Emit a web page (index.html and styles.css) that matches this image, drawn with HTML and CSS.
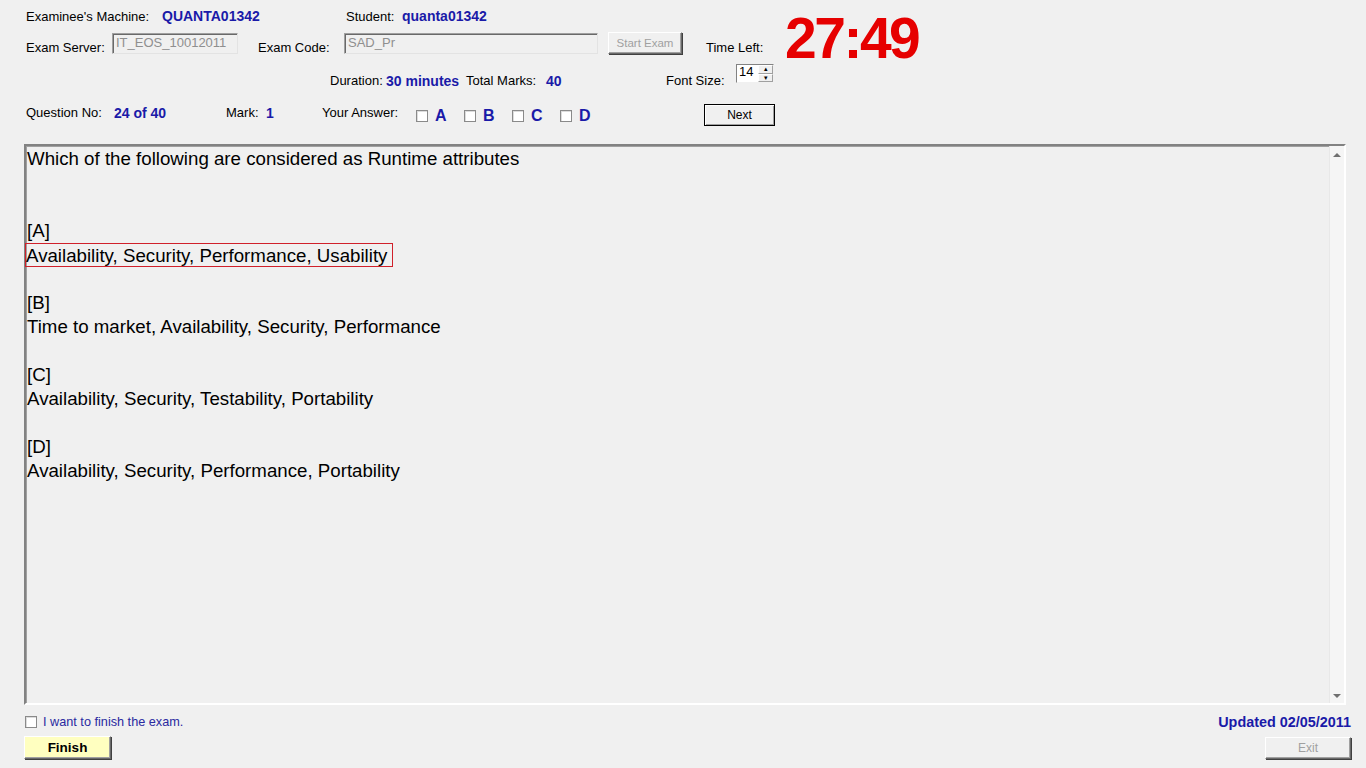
FILE: index.html
```html
<!DOCTYPE html>
<html>
<head>
<meta charset="utf-8">
<link rel="stylesheet" href="styles.css">
</head>
<body>
<div class="page">
  <div class="header">
    <div class="hleft">
      <div class="row r1">
        <span class="lbl w-machine">Examinee's Machine:</span>
        <span class="val w-machval">QUANTA01342</span>
        <span class="lbl w-student">Student:</span>
        <span class="val">quanta01342</span>
      </div>
      <div class="row r2">
        <span class="lbl low w-server">Exam Server:</span>
        <span class="tbox tb-server">IT_EOS_10012011</span>
        <span class="lbl low w-code">Exam Code:</span>
        <span class="tbox tb-code">SAD_Pr</span>
        <span class="btn btn-start">Start Exam</span>
        <span class="lbl low timeleft">Time Left:</span>
      </div>
      <div class="row r3">
        <span class="lbl w-dur">Duration:</span>
        <span class="val w-durval">30 minutes</span>
        <span class="lbl w-tm">Total Marks:</span>
        <span class="val w-tmval">40</span>
        <span class="lbl low w-fs">Font Size:</span>
        <span class="spin"><span class="spinval">14</span><span class="spinbtns"><span class="sb">&#9652;</span><span class="sb">&#9662;</span></span></span>
      </div>
    </div>
    <div class="timer">27:49</div>
  </div>
  <div class="row r4">
    <span class="lbl w-qno">Question No:</span>
    <span class="val w-qval">24 of 40</span>
    <span class="lbl w-mark">Mark:</span>
    <span class="val w-mval">1</span>
    <span class="lbl w-ans">Your Answer:</span>
    <span class="opts">
      <span class="opt"><span class="cb"></span><span class="optl">A</span></span>
      <span class="opt"><span class="cb"></span><span class="optl">B</span></span>
      <span class="opt"><span class="cb"></span><span class="optl">C</span></span>
      <span class="opt"><span class="cb"></span><span class="optl">D</span></span>
    </span>
    <span class="btn btn-next">Next</span>
  </div>
  <div class="qbox">
    <div class="qtext">
      <div class="ln">Which of the following are considered as Runtime attributes</div>
      <div class="ln">&nbsp;</div>
      <div class="ln">&nbsp;</div>
      <div class="ln">[A]</div>
      <div class="ln"><span class="sel">Availability, Security, Performance, Usability</span></div>
      <div class="ln">&nbsp;</div>
      <div class="ln">[B]</div>
      <div class="ln">Time to market, Availability, Security, Performance</div>
      <div class="ln">&nbsp;</div>
      <div class="ln">[C]</div>
      <div class="ln">Availability, Security, Testability, Portability</div>
      <div class="ln">&nbsp;</div>
      <div class="ln">[D]</div>
      <div class="ln">Availability, Security, Performance, Portability</div>
    </div>
    <div class="vscroll">
      <span class="arr up"></span>
      <span class="arr down"></span>
    </div>
  </div>
  <div class="footer">
    <div class="fleft">
      <div class="finishrow"><span class="cb"></span><span class="finishlbl">I want to finish the exam.</span></div>
      <span class="btn btn-finish">Finish</span>
    </div>
    <div class="fright">
      <div class="updated">Updated 02/05/2011</div>
      <span class="btn btn-exit">Exit</span>
    </div>
  </div>
</div>
</body>
</html>
```
FILE: styles.css
```css
html, body {
  margin: 0;
  padding: 0;
  background: #f0f0f0;
}
body {
  font-family: "Liberation Sans", Arial, sans-serif;
  font-size: 13px;
  color: #000;
}
.page {
  width: 1366px;
  height: 768px;
  overflow: hidden;
  position: relative;
}
.header {
  display: flex;
  align-items: flex-start;
}
.hleft {
  width: 785px;
  flex: none;
}
.row {
  display: flex;
  align-items: center;
}
.lbl {
  white-space: nowrap;
  flex: none;
}
.val {
  color: #1a1aa8;
  font-weight: bold;
  font-size: 14px;
  white-space: nowrap;
  flex: none;
}
.r1 {
  padding-left: 26px;
  height: 16px;
  margin-top: 8px;
}
.w-machine { width: 136px; }
.w-machval { width: 184px; }
.w-student { width: 56px; }

.r2 {
  padding-left: 26px;
  margin-top: 8px;
  height: 23px;
  align-items: flex-start;
}
.low { margin-top: 8px; }
.w-server { width: 86px; }
.w-code { width: 86px; margin-left: 20px; }
.tbox {
  box-sizing: border-box;
  height: 21px;
  margin-top: 1px;
  border: 1px solid #a0a0a0;
  border-right-color: #e3e3e3;
  border-bottom-color: #e3e3e3;
  box-shadow: inset 1px 1px 0 #696969;
  color: #8f8f8f;
  background: #f0f0f0;
  padding: 1px 3px;
  font-size: 13px;
  line-height: 15px;
  white-space: nowrap;
  flex: none;
}
.tb-server { width: 126px; }
.tb-code { width: 254px; }
.btn {
  box-sizing: border-box;
  display: flex;
  align-items: center;
  justify-content: center;
  border: 1px solid #fff;
  border-right-color: #696969;
  border-bottom-color: #696969;
  box-shadow: 1px 1px 0 #404040, inset -1px -1px 0 #a0a0a0;
  background: #f0f0f0;
  font-size: 12px;
  white-space: nowrap;
  flex: none;
}
.btn-start {
  width: 74px;
  height: 22px;
  margin-left: 10px;
  color: #a0a0a0;
  font-size: 11.5px;
}
.timeleft { margin-left: 24px; }

.r3 {
  margin-top: 9px;
  height: 21px;
  padding-left: 330px;
  align-items: flex-start;
}
.r3 .lbl, .r3 .val { margin-top: 9px; }
.w-dur { width: 56px; }
.w-durval { width: 80px; }
.w-tm { width: 80px; }
.w-tmval { width: 120px; }
.w-fs { width: 70px; }
.spin {
  box-sizing: border-box;
  display: flex;
  width: 38px;
  height: 19px;
  background: #fff;
  border: 1px solid #828282;
  border-right-color: #f0f0f0;
  border-bottom-color: #f0f0f0;
  flex: none;
}
.spinval {
  flex: 1;
  font-size: 13px;
  line-height: 14px;
  padding-left: 2px;
}
.spinbtns {
  display: flex;
  flex-direction: column;
  width: 15px;
}
.sb {
  box-sizing: border-box;
  flex: 1;
  background: #f0f0f0;
  border: 1px solid #fff;
  border-right-color: #a0a0a0;
  border-bottom-color: #a0a0a0;
  font-size: 7px;
  line-height: 6px;
  text-align: center;
  color: #000;
}
.timer {
  color: #e60000;
  font-weight: bold;
  font-size: 57px;
  letter-spacing: -2.5px;
  line-height: 60px;
  margin-top: 8px;
}

.r4 {
  padding-left: 26px;
  margin-top: 19px;
  height: 22px;
}
.r4 .lbl, .r4 .val { align-self: flex-start; margin-top: 1px; }
.w-qno { width: 88px; }
.w-qval { width: 112px; }
.w-mark { width: 40px; }
.w-mval { width: 56px; }
.w-ans { width: 94px; }
.opts {
  display: flex;
  width: 288px;
  margin-top: 2px;
}
.opt {
  display: flex;
  align-items: center;
  width: 48px;
}
.cb {
  box-sizing: border-box;
  display: inline-block;
  width: 12px;
  height: 12px;
  background: #fff;
  border: 1px solid #8a8a8a;
  box-shadow: inset 1px 1px 0 #dcdcdc;
  flex: none;
}
.optl {
  margin-left: 7px;
  color: #1a1aa8;
  font-weight: bold;
  font-size: 16px;
}
.btn-next {
  width: 71px;
  height: 22px;
  border: 1px solid #000;
  box-shadow: inset 1px 1px 0 #fff, inset -1px -1px 0 #a0a0a0;
}

.qbox {
  box-sizing: border-box;
  display: flex;
  margin-top: 18px;
  margin-left: 24px;
  width: 1322px;
  height: 561px;
  border: 2px solid #828282;
  border-right-color: #fff;
  border-bottom-color: #fff;
  box-shadow: inset 1px 1px 0 #a0a0a0;
}
.qtext {
  flex: 1;
  padding-top: 1px;
  font-size: 18.7px;
  line-height: 24px;
  color: #000;
}
.ln {
  white-space: nowrap;
  height: 24px;
  padding-left: 1px;
}
.sel {
  display: inline-block;
  box-sizing: border-box;
  height: 24px;
  border: 1px solid #d0202a;
  padding: 0 5px 0 0;
  margin-left: -2px;
}
.vscroll {
  width: 14px;
  flex: none;
  display: flex;
  flex-direction: column;
  justify-content: space-between;
  align-items: center;
  background: #f5f5f5;
  border-left: 1px solid #e8e8e8;
  padding: 7px 0 5px;
}
.arr {
  width: 0;
  height: 0;
  border-left: 4px solid transparent;
  border-right: 4px solid transparent;
}
.arr.up { border-bottom: 4px solid #707070; }
.arr.down { border-top: 4px solid #707070; }

.footer {
  display: flex;
  justify-content: space-between;
  padding: 0 15px 0 24px;
  margin-top: 10px;
}
.finishrow {
  display: flex;
  align-items: center;
  height: 14px;
  padding-left: 1px;
}
.finishlbl {
  margin-left: 6px;
  color: #2a2aa0;
  font-size: 12.7px;
}
.btn-finish {
  margin-top: 7px;
  width: 87px;
  height: 23px;
  background: #ffffc0;
  font-weight: bold;
  font-size: 13.5px;
}
.fright {
  display: flex;
  flex-direction: column;
  align-items: flex-end;
}
.updated {
  color: #1a1aa8;
  font-weight: bold;
  font-size: 14.4px;
  height: 14px;
  line-height: 14px;
}
.btn-exit {
  margin-top: 8px;
  width: 86px;
  height: 22px;
  color: #a0a0a0;
}
```
